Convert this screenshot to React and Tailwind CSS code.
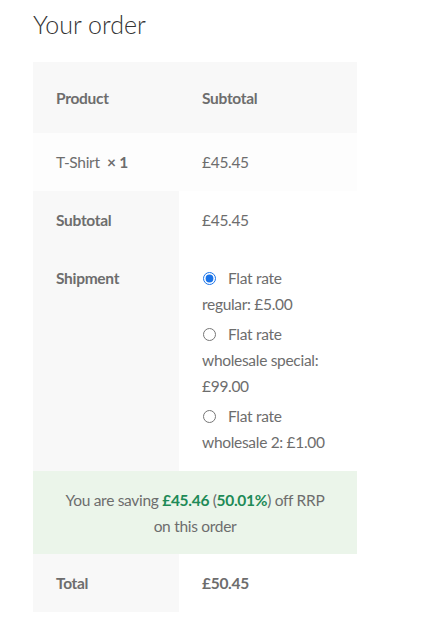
export default function App() {
  const font = { fontFamily: 'Lato, "Noto Sans", sans-serif' };
  const radio = "mr-[12px] ml-[1px] align-[-1px] w-[13px] h-[13px] accent-[#1a73e8]";
  return (
    <div className="min-h-screen bg-white text-[#6d6d6d] px-[33px]" style={font}>
      <h3 className="pt-[9px] text-[25px] leading-[31px] font-light text-[#333333]">Your order</h3>
      <table className="mt-[22px] w-[324px] border-collapse text-[15.5px] leading-[26px] tracking-[-0.3px]">
        <colgroup>
          <col className="w-[146px]" />
          <col />
        </colgroup>
        <thead>
          <tr className="bg-[#f8f8f8]">
            <th className="px-[23px] py-[22.5px] text-left font-bold">Product</th>
            <th className="px-[23px] py-[22.5px] text-left font-bold">Subtotal</th>
          </tr>
        </thead>
        <tbody>
          <tr className="bg-[#fdfdfd]">
            <td className="px-[23px] py-4">
              T-Shirt&nbsp; <strong className="font-bold">×&nbsp;1</strong>
            </td>
            <td className="px-[23px] py-4">£45.45</td>
          </tr>
        </tbody>
        <tfoot>
          <tr>
            <th className="bg-[#f8f8f8] px-[23px] py-4 text-left font-bold align-top">Subtotal</th>
            <td className="px-[23px] py-4">£45.45</td>
          </tr>
          <tr>
            <th className="bg-[#f8f8f8] px-[23px] py-4 text-left font-bold align-top">Shipment</th>
            <td className="px-[23px] py-4 align-top">
              <ul className="flex flex-col gap-1">
                <li>
                  <input type="radio" name="ship" defaultChecked className={radio} />
                  Flat rate
                  <br />
                  regular: £5.00
                </li>
                <li>
                  <input type="radio" name="ship" className={radio} />
                  Flat rate
                  <br />
                  wholesale special: £99.00
                </li>
                <li>
                  <input type="radio" name="ship" className={radio} />
                  Flat rate
                  <br />
                  wholesale 2: £1.00
                </li>
              </ul>
            </td>
          </tr>
          <tr>
            <td colSpan={2} className="bg-[#ebf5ea] px-[23px] py-[15.5px] text-center">
              You are saving <strong className="font-bold text-[#1e8a57]">£45.46</strong>{" "}
              (<strong className="font-bold text-[#1e8a57]">50.01%</strong>) off RRP
              <br />
              on this order
            </td>
          </tr>
          <tr>
            <th className="bg-[#f8f8f8] px-[23px] py-4 text-left font-bold">Total</th>
            <td className="px-[23px] py-4 font-bold">£50.45</td>
          </tr>
        </tfoot>
      </table>
    </div>
  );
}
